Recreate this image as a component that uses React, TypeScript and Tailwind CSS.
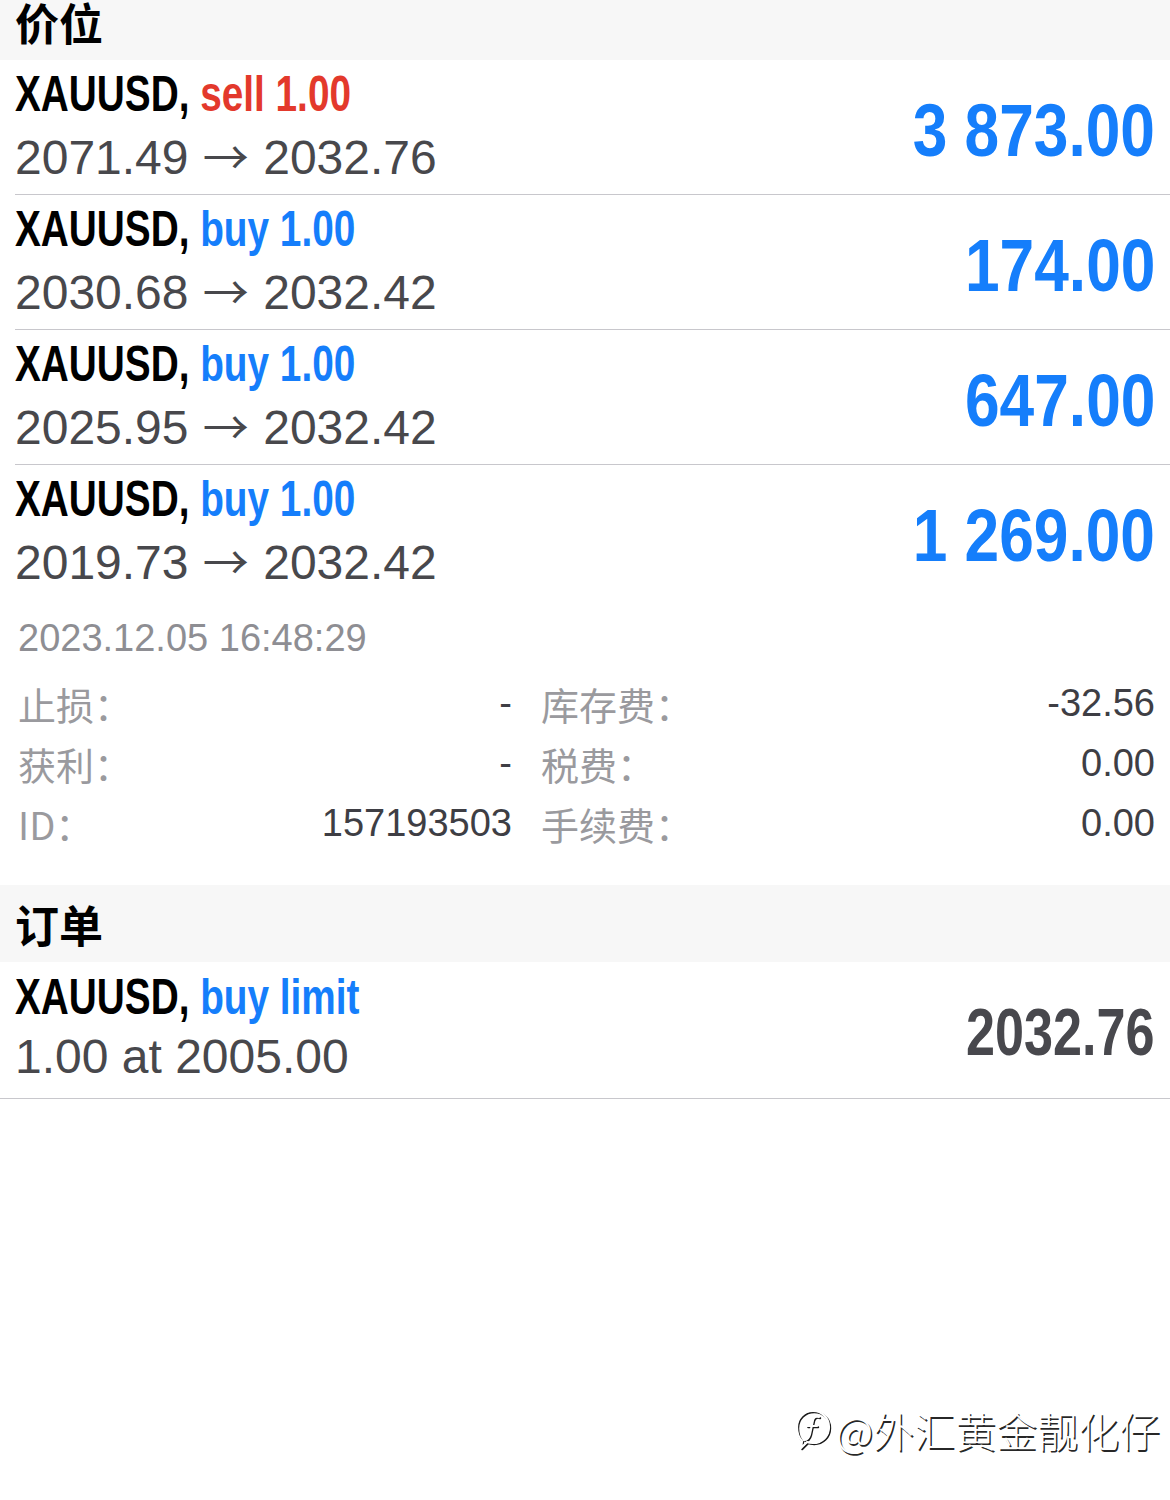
const sans = "font-['Liberation_Sans','Noto_Sans_CJK_SC',sans-serif]";
const cjk = "font-['Noto_Sans_CJK_SC',sans-serif]";
// bold condensed look: Liberation Sans Bold squeezed horizontally
const condensed = "font-['Liberation_Sans',sans-serif] font-bold inline-block";

type Position = {
  side: "sell" | "buy";
  open: string;
  current: string;
  profit: string;
};

const positions: Position[] = [
  { side: "sell", open: "2071.49", current: "2032.76", profit: "3 873.00" },
  { side: "buy", open: "2030.68", current: "2032.42", profit: "174.00" },
  { side: "buy", open: "2025.95", current: "2032.42", profit: "647.00" },
  { side: "buy", open: "2019.73", current: "2032.42", profit: "1 269.00" },
];

function Arrow() {
  return <span className={`${cjk} text-[46px] mx-[1px]`}>→</span>;
}

function TradeTitle({ children }: { children: React.ReactNode }) {
  return (
    <div className="h-[60px] flex items-center">
      <span className={`${condensed} text-[50px] leading-[60px] text-black origin-left scale-x-[0.775] whitespace-nowrap`}>
        {children}
      </span>
    </div>
  );
}

function PositionRow({ p, last }: { p: Position; last: boolean }) {
  const color = p.side === "sell" ? "text-[#e3392c]" : "text-[#157efb]";
  return (
    <div className="pl-[15px]">
      <div
        className={`flex justify-between h-[135px] pr-[15px] ${
          last ? "" : "border-b border-[#c8c7cc]"
        }`}
      >
        <div className="pt-[4px]">
          <TradeTitle>
            XAUUSD, <span className={color}>{p.side} 1.00</span>
          </TradeTitle>
          <div className={`${sans} text-[48px] leading-[60px] text-[#48484c] whitespace-nowrap`}>
            {p.open} <Arrow /> {p.current}
          </div>
        </div>
        <div className="flex items-center pt-[6px]">
          <span className={`${condensed} text-[75px] leading-none text-[#157efb] origin-right scale-x-[0.83] whitespace-nowrap`}>
            {p.profit}
          </span>
        </div>
      </div>
    </div>
  );
}

function Detail({ label, value }: { label: string; value: string }) {
  return (
    <div className="flex justify-between items-center h-[60px]">
      <span className={`${cjk} text-[38px] text-[#9a9a9e]`}>{label}</span>
      <span className={`${sans} text-[38px] text-[#3e3e44]`}>{value}</span>
    </div>
  );
}

function BubbleLogo() {
  const bubble = "M19 5c9 0 16 7 16 16s-7 16-16 16c-2 0-4 0-6-1l-6 6 1-7C5 32 3 27 3 21 3 12 10 5 19 5z";
  const f = "M25 11c-3-1-5 0-6 3l-3 14c-1 4-3 6-6 6";
  const bar = "M13 20h10";
  return (
    <svg width="40" height="46" viewBox="0 0 40 46" fill="none" strokeLinecap="round" strokeLinejoin="round">
      <g stroke="#1a1a1a" strokeWidth="2" transform="translate(1.2 1.2)">
        <path d={bubble} />
        <path d={f} />
        <path d={bar} />
      </g>
      <g stroke="#ffffff" strokeWidth="2.2">
        <path d={bubble} />
        <path d={f} />
        <path d={bar} />
      </g>
    </svg>
  );
}

export default function App() {
  return (
    <div className="relative min-h-[1500px] bg-white">
      <div className="bg-[#f7f7f7] h-[60px] pl-[15px]">
        <div className={`${cjk} font-bold text-[44px] leading-[44px] text-black`}>价位</div>
      </div>

      {positions.map((p, i) => (
        <PositionRow key={i} p={p} last={i === positions.length - 1} />
      ))}

      <div className="mt-[13px] pl-[18px] pr-[15px] pb-[32px]">
        <div className={`${sans} text-[38px] leading-[50px] text-[#8e8e93]`}>2023.12.05 16:48:29</div>
        <div className="mt-[10px] grid grid-cols-[494px_614px] gap-x-[29px]">
          <Detail label="止损：" value="-" />
          <Detail label="库存费：" value="-32.56" />
          <Detail label="获利：" value="-" />
          <Detail label="税费：" value="0.00" />
          <Detail label="ID：" value="157193503" />
          <Detail label="手续费：" value="0.00" />
        </div>
      </div>

      <div className="bg-[#f7f7f7] h-[77px] flex items-center pl-[15px]">
        <span className={`${cjk} font-bold text-[44px] text-black`}>订单</span>
      </div>

      <div className="flex justify-between h-[137px] pl-[15px] pr-[15px] border-b border-[#c8c7cc]">
        <div className="pt-[5px]">
          <TradeTitle>
            XAUUSD, <span className="text-[#157efb]">buy limit</span>
          </TradeTitle>
          <div className={`${sans} text-[48px] leading-[60px] text-[#48484c]`}>1.00 at 2005.00</div>
        </div>
        <div className="flex items-center pt-[4px]">
          <span className={`${condensed} text-[66px] leading-none text-[#48484d] origin-right scale-x-[0.79]`}>2032.76</span>
        </div>
      </div>

      <div className="absolute right-[10px] top-[1406px] flex items-center">
        <BubbleLogo />
        <span
          className={`${cjk} ml-[2px] text-[41px] leading-[46px] font-light text-white [text-shadow:1.5px_1.5px_0_rgba(0,0,0,0.85)]`}
        >
          @外汇黄金靓化仔
        </span>
      </div>
    </div>
  );
}
